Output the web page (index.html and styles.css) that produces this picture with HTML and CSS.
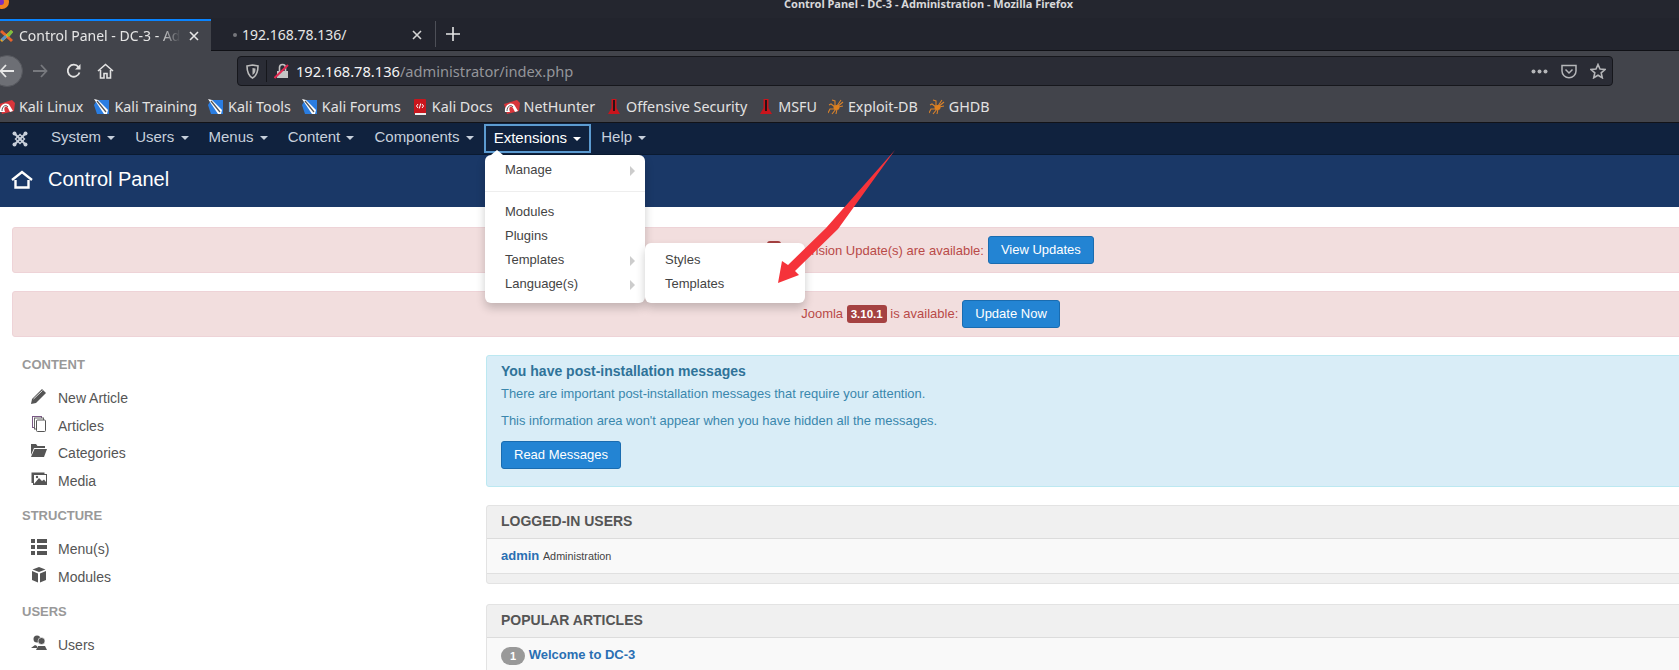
FILE: index.html
```html
<!DOCTYPE html>
<html lang="en">
<head>
  <meta charset="UTF-8">
  <title>Control Panel - DC-3 - Administration</title>
  <link rel="stylesheet" href="styles.css">
</head>
<body>
  <svg class="sprites" width="0" height="0">
    <symbol id="kaliRed" viewBox="0 0 16 16">
      <path d="M0 5 L13 1 L16 4 L15 12 L3 15 Z" fill="#d8353b"/>
      <path d="M1 13 C0 5 8 2 11 7 L14 12 L11 13 L9 9 C7 6 4 8 6 13 Z" fill="#fff"/>
      <path d="M3 12 C3 7 7 5 9 8" stroke="#333" stroke-width=".8" fill="none"/>
    </symbol>
    <symbol id="kaliBlue" viewBox="0 0 16 16">
      <path d="M3 1 H15 V15 H3 L0 6 Z" fill="#2a7de1"/>
      <path d="M0 0 L4 1 L14 11 L13 15 L10 15 Z" fill="#fff"/>
      <path d="M3 2 L12 13" stroke="#555" stroke-width="1.300"/>
    </symbol>
    <symbol id="kaliDocs" viewBox="0 0 16 16">
      <rect x="2" y="0" width="12" height="15" rx="1" fill="#c8161d"/>
      <rect x="3" y="14" width="11" height="2" fill="#eee"/>
      <path d="M6 5 L4.500 7 L6 9 M10 5 L11.500 7 L10 9 M8.700 4.500 L7.300 9.500" stroke="#fff" stroke-width="1" fill="none"/>
    </symbol>
    <symbol id="tower" viewBox="0 0 16 16">
      <path d="M5.500 0 H10.500 L10.500 9 L14 15 H2 L5.500 9 Z" fill="#c9141c"/>
      <rect x="7" y="1" width="2" height="11" fill="#2a1214"/>
    </symbol>
    <symbol id="spider" viewBox="0 0 16 16">
      <g stroke="#d9822b" stroke-width="1.100" fill="none">
        <path d="M9 7 L13 1 M9 8 L15 3 M10 8 L15 7 M7 7 L7 2 L4 1 M7 8 L3 5 L1 6 M7 10 L2 10 L0 14 M8 10 L4 15 M9 10 L8 15"/>
      </g>
      <ellipse cx="8.500" cy="8.500" rx="3" ry="2.500" fill="#dd7f1e"/>
    </symbol>
  </svg>

  <div class="titlebar">
    <svg class="ff-logo" width="12" height="12" viewBox="0 0 12 12"><circle cx="2" cy="2" r="7" fill="#f3831f"/><circle cx="1" cy="2" r="3" fill="#7b2fbe"/></svg>
    <span class="window-title">Control Panel - DC-3 - Administration - Mozilla Firefox</span>
  </div>

  <div class="tabstrip">
    <div class="tab tab-active">
      <svg class="favicon" width="14" height="16" viewBox="0 0 14 16">
        <path d="M1 3 L12 13" stroke="#e8642c" stroke-width="3"/>
        <path d="M12 3 L1 13" stroke="#f4a81d" stroke-width="3"/>
        <path d="M2 12 L6 8" stroke="#5091cd" stroke-width="3"/>
        <path d="M8 8 L12 3" stroke="#7ac143" stroke-width="3"/>
      </svg>
      <span class="tab-title fade">Control Panel - DC-3 - Ad</span>
      <svg class="tab-x" width="10" height="10" viewBox="0 0 10 10"><path d="M1 1 L9 9 M9 1 L1 9" stroke="#e6e6e6" stroke-width="1.600"/></svg>
    </div>
    <div class="tab tab-other">
      <span class="tab-dot"></span>
      <span class="tab-title">192.168.78.136/</span>
      <svg class="tab-x" width="10" height="10" viewBox="0 0 10 10"><path d="M1 1 L9 9 M9 1 L1 9" stroke="#d5d5d5" stroke-width="1.600"/></svg>
    </div>
    <span class="tab-sep"></span>
    <svg class="tab-new" width="14" height="14" viewBox="0 0 14 14"><path d="M7 0 V14 M0 7 H14" stroke="#e6e6e6" stroke-width="1.600"/></svg>
  </div>

  <div class="toolbar">
    <div class="navbtns">
      <span class="back-circle">
        <svg width="16" height="14" viewBox="0 0 16 14"><path d="M15 7 H2 M7 1 L1.500 7 L7 13" stroke="#e8e8e8" stroke-width="1.800" fill="none"/></svg>
      </span>
      <svg class="nav-fwd" width="16" height="14" viewBox="0 0 16 14"><path d="M1 7 H14 M9 1 L14.500 7 L9 13" stroke="#77797e" stroke-width="1.800" fill="none"/></svg>
      <svg class="nav-reload" width="16" height="16" viewBox="0 0 16 16"><path d="M13.500 9.500 A6 6 0 1 1 12.500 4" stroke="#e2e2e2" stroke-width="1.800" fill="none"/><path d="M14.500 1 V6.500 H9 Z" fill="#e2e2e2"/></svg>
      <svg class="nav-home" width="17" height="16" viewBox="0 0 17 16"><path d="M1 8 L8.500 1.500 L16 8 M3.500 7 V15 H7 V10.500 H10 V15 H13.500 V7" stroke="#e2e2e2" stroke-width="1.600" fill="none"/></svg>
    </div>
    <div class="urlbar">
      <svg class="url-shield" width="13" height="15" viewBox="0 0 13 15"><path d="M1 2 L6.500 1 L12 2 C12 8 11 11.500 6.500 14 C2 11.500 1 8 1 2 Z" stroke="#bbb" stroke-width="1.600" fill="none"/><path d="M6.500 4 L9.500 4.500 C9.500 8 9 9.500 6.500 11 Z" fill="#bbb"/></svg>
      <span class="url-sep"></span>
      <svg class="url-lock" width="15" height="16" viewBox="0 0 15 16"><path d="M3 8 H14 V15 H3 Z" fill="#c4c4c4"/><path d="M5.500 8 V4.500 A3 3 0 0 1 11.500 4.500 V8" stroke="#c4c4c4" stroke-width="1.600" fill="none"/><path d="M0.500 15 L14 2" stroke="#e22850" stroke-width="2"/></svg>
      <span class="url-text"><span class="url-host">192.168.78.136</span>/administrator/index.php</span>
      <span class="url-actions">
        <svg width="17" height="5" viewBox="0 0 17 5"><circle cx="2.500" cy="2.500" r="2" fill="#b5b6b9"/><circle cx="8.500" cy="2.500" r="2" fill="#b5b6b9"/><circle cx="14.500" cy="2.500" r="2" fill="#b5b6b9"/></svg>
        <svg width="16" height="15" viewBox="0 0 16 15"><path d="M1 1.500 H15 V7 A7 6.800 0 0 1 1 7 Z" stroke="#b5b6b9" stroke-width="1.500" fill="none"/><path d="M4.500 5.500 L8 9 L11.500 5.500" stroke="#b5b6b9" stroke-width="1.500" fill="none"/></svg>
        <svg width="16" height="16" viewBox="0 0 16 16"><path d="M8 1.500 L10 6 L15 6.500 L11.200 9.800 L12.300 14.800 L8 12.200 L3.700 14.800 L4.800 9.800 L1 6.500 L6 6 Z" stroke="#b5b6b9" stroke-width="1.600" fill="none"/></svg>
      </span>
    </div>
    <div class="bookmarks">
      <span class="bm"><svg width="16" height="16"><use href="#kaliRed"/></svg>Kali Linux</span>
      <span class="bm"><svg width="16" height="16"><use href="#kaliBlue"/></svg>Kali Training</span>
      <span class="bm"><svg width="16" height="16"><use href="#kaliBlue"/></svg>Kali Tools</span>
      <span class="bm"><svg width="16" height="16"><use href="#kaliBlue"/></svg>Kali Forums</span>
      <span class="bm"><svg width="16" height="16"><use href="#kaliDocs"/></svg>Kali Docs</span>
      <span class="bm"><svg width="16" height="16"><use href="#kaliRed"/></svg>NetHunter</span>
      <span class="bm"><svg width="16" height="16"><use href="#tower"/></svg>Offensive Security</span>
      <span class="bm"><svg width="16" height="16"><use href="#tower"/></svg>MSFU</span>
      <span class="bm"><svg width="16" height="16"><use href="#spider"/></svg>Exploit-DB</span>
      <span class="bm"><svg width="16" height="16"><use href="#spider"/></svg>GHDB</span>
    </div>
  </div>

  <div class="viewport">
    <div class="page">
      <nav class="admin-nav">
        <svg class="joomla-logo" width="16" height="16" viewBox="0 0 16 16">
          <g fill="none" stroke="#c9d0da" stroke-width="2">
            <path d="M3 3 L8 8 L13 13 M13 3 L8 8 L3 13"/>
            <path d="M8 3.500 L12.500 8 L8 12.500 L3.500 8 Z" stroke-width="1.400"/>
          </g>
          <circle cx="2.500" cy="2.500" r="2" fill="#c9d0da"/><circle cx="13.500" cy="2.500" r="2" fill="#c9d0da"/><circle cx="2.500" cy="13.500" r="2" fill="#c9d0da"/><circle cx="13.500" cy="13.500" r="2" fill="#c9d0da"/>
        </svg>
        <ul class="nav-menu">
          <li>System <b class="caret"></b></li>
          <li>Users <b class="caret"></b></li>
          <li>Menus <b class="caret"></b></li>
          <li>Content <b class="caret"></b></li>
          <li>Components <b class="caret"></b></li>
          <li class="open">Extensions <b class="caret"></b></li>
          <li>Help <b class="caret"></b></li>
        </ul>
      </nav>

      <header class="page-head">
        <svg width="22" height="19" viewBox="0 0 22 19"><path d="M1 10 L11 2 L21 10" stroke="#fff" stroke-width="2.400" fill="none"/><path d="M4.500 10 V17.500 H17.500 V10" stroke="#fff" stroke-width="2.400" fill="none"/></svg>
        <h1>Control Panel</h1>
      </header>

      <div class="content">
        <div class="notice notice-first">
          <span class="count-badge"></span>
          <span>Extension Update(s) are available:</span>
          <span class="btn">View Updates</span>
        </div>
        <div class="notice">
          <span>Joomla <span class="version">3.10.1</span> is available:</span>
          <span class="btn">Update Now</span>
        </div>

        <div class="columns">
          <aside class="sidebar">
            <h2>CONTENT</h2>
            <ul>
              <li>
                <svg width="16" height="16" viewBox="0 0 16 16"><path d="M0 16 L1 11 L11 1 L15 5 L5 15 Z" fill="#555"/><path d="M2.500 11 L11.500 2.500" stroke="#fff" stroke-width=".8"/></svg>
                New Article
              </li>
              <li>
                <svg width="16" height="16" viewBox="0 0 16 16"><rect x="1.500" y="0.500" width="9" height="11" fill="#fff" stroke="#7b5a86"/><rect x="3.500" y="2" width="9" height="11" fill="#fff" stroke="#666"/><rect x="5.500" y="4" width="9" height="11.500" rx="1" fill="#fff" stroke="#555"/></svg>
                Articles
              </li>
              <li>
                <svg width="16" height="14" viewBox="0 0 16 14"><path d="M0 0 H5 L6.500 2 H14 V4 H3 L0 11 Z" fill="#555"/><path d="M3.500 5 H16 L13 13 H0 Z" fill="#555"/></svg>
                Categories
              </li>
              <li>
                <svg width="16" height="13" viewBox="0 0 16 13"><path d="M0.500 0.500 H13.500 V2 H2 V11 H0.500 Z" fill="#555"/><rect x="2.500" y="2.500" width="13" height="10" fill="#fff" stroke="#555"/><path d="M3 12 L8 6 L11 9 L13 7.500 L15 10 V12 Z" fill="#555"/><circle cx="6" cy="5" r="1.200" fill="#555"/></svg>
                Media
              </li>
            </ul>
            <h2>STRUCTURE</h2>
            <ul>
              <li>
                <svg width="16" height="16" viewBox="0 0 16 16"><path d="M0 0 H4 V4 H0 Z M6 0 H16 V4 H6 Z M0 6 H4 V10 H0 Z M6 6 H16 V10 H6 Z M0 12 H4 V16 H0 Z M6 12 H16 V16 H6 Z" fill="#555"/></svg>
                Menu(s)
              </li>
              <li>
                <svg width="16" height="16" viewBox="0 0 16 16"><path d="M8 0 L14.500 2.500 L8 5 L1.500 2.500 Z M1 4 L7 6.500 V15.500 L1 13 Z M15 4 L9 6.500 V15.500 L15 13 Z" fill="#555"/></svg>
                Modules
              </li>
            </ul>
            <h2>USERS</h2>
            <ul>
              <li>
                <svg width="16" height="15" viewBox="0 0 16 15"><circle cx="6" cy="4" r="3.500" fill="#555"/><circle cx="10.500" cy="6" r="3.500" fill="#555" stroke="#fff" stroke-width=".6"/><path d="M0 13 L4 10 L6 11 L6 13 Z M5 15 L7 11 L14 11 L16 15 Z" fill="#555"/></svg>
                Users
              </li>
            </ul>
          </aside>

          <main class="main-col">
            <div class="info-box">
              <h4>You have post-installation messages</h4>
              <p>There are important post-installation messages that require your attention.</p>
              <p>This information area won't appear when you have hidden all the messages.</p>
              <span class="btn btn-read">Read Messages</span>
            </div>

            <section class="well well-users">
              <h2>LOGGED-IN USERS</h2>
              <div class="well-row"><a class="link">admin</a> <small>Administration</small></div>
            </section>

            <section class="well well-popular">
              <h2>POPULAR ARTICLES</h2>
              <div class="well-row"><span class="hits">1</span> <a class="link">Welcome to DC-3</a></div>
            </section>
          </main>
        </div>
      </div>

      <ul class="dropdown">
        <li class="has-sub">Manage</li>
        <li class="divider"></li>
        <li>Modules</li>
        <li>Plugins</li>
        <li class="has-sub">Templates</li>
        <li class="has-sub">Language(s)</li>
      </ul>
      <ul class="dropdown dropdown-sub">
        <li>Styles</li>
        <li>Templates</li>
      </ul>
    </div>

    <svg class="arrow" width="130" height="140" viewBox="0 0 130 140"><path d="M125 5 L68 84 L25 126 L29 130 L8 138 L12 116 L18 120 L56 83 Z" fill="#f5333a"/></svg>
  </div>
</body>
</html>
```

FILE: styles.css
```css
html, body {
  margin: 0;
  height: 670px;
  overflow: hidden;
  background: #fff;
}

body {
  font-family: "Liberation Sans", Arial, sans-serif;
  font-size: 14px;
  color: #555;
}

ul {
  list-style: none;
  margin: 0;
  padding: 0;
}

.sprites {
  position: absolute;
}

/* firefox chrome */
.titlebar {
  height: 18px;
  background: #24262f;
  position: relative;
  text-align: center;
  overflow: hidden;
  padding-left: 178px;
  box-sizing: border-box;
}

.ff-logo {
  position: absolute;
  left: 0;
  top: 0;
}

.window-title {
  display: block;
  margin-top: -5px;
  font: bold 11px "Noto Sans", sans-serif;
  line-height: 18px;
  color: #d8d8da;
}

.tabstrip {
  height: 33px;
  background: #22242d;
  border-bottom: 1px solid #101116;
  display: flex;
  align-items: center;
  box-sizing: border-box;
}

.tab {
  height: 32px;
  display: flex;
  align-items: center;
  gap: 5px;
  color: #e6e6e6;
  font: 14px "Noto Sans", sans-serif;
  box-sizing: border-box;
  margin-top: 1px;
}

.tab-other {
  width: 218px;
  padding: 0 7px 0 14px;
}

.tab-active {
  width: 211px;
  padding-right: 12px;
  background: #42444b;
  border-top: 2px solid #0a84ff;
}

.tab-title {
  flex: 1;
  white-space: nowrap;
  overflow: hidden;
}

.fade {
  -webkit-mask-image: linear-gradient(to right, #000 85%, transparent 98%);
  mask-image: linear-gradient(to right, #000 85%, transparent 98%);
}

.tab-dot {
  width: 4px;
  height: 4px;
  margin-left: 8px;
  border-radius: 50%;
  background: #75767b;
}

.tab-sep {
  width: 1px;
  height: 26px;
  margin-left: 6px;
  background: #4d4f57;
}

.tab-new {
  margin-left: 10px;
}

.toolbar {
  height: 71px;
  background: #42444b;
  position: relative;
  border-bottom: 1px solid #121318;
  box-sizing: content-box;
}

.navbtns {
  position: absolute;
  left: -9px;
  top: 4px;
  display: flex;
  align-items: center;
}

.back-circle {
  width: 32px;
  height: 32px;
  border-radius: 50%;
  background: #6d6f75;
  border: 1px solid #55575d;
  box-sizing: border-box;
  display: flex;
  align-items: center;
  justify-content: center;
}

.nav-fwd {
  margin-left: 9px;
}

.nav-reload {
  margin-left: 18px;
}

.nav-home {
  margin-left: 15px;
}

.urlbar {
  position: absolute;
  left: 237px;
  top: 5px;
  width: 1376px;
  height: 30px;
  background: #2a2c35;
  border: 1px solid #16171c;
  border-radius: 4px;
  display: flex;
  align-items: center;
  box-sizing: border-box;
  padding-left: 8px;
}

.url-sep {
  width: 1px;
  height: 22px;
  margin: 0 7px 0 7px;
  background: #16171c;
}

.url-text {
  margin-left: 7px;
  font: 14.650px "Noto Sans", sans-serif;
  color: #94959a;
}

.url-host {
  color: #f4f4f5;
}

.url-actions {
  margin-left: auto;
  display: flex;
  align-items: center;
  gap: 13px;
  padding-right: 6px;
}

.bookmarks {
  position: absolute;
  left: -1px;
  top: 46px;
  display: flex;
  align-items: center;
  gap: 11px;
  font: 14.300px "Noto Sans", sans-serif;
  color: #e2e2e2;
  white-space: nowrap;
}

.bm {
  display: flex;
  align-items: center;
  gap: 4px;
}

/* joomla page, wider than the window */
.viewport {
  height: 547px;
  overflow: hidden;
  position: relative;
}

.page {
  width: 1861px;
  position: relative;
}

.admin-nav {
  height: 32px;
  background: #10223e;
  display: flex;
  align-items: center;
  box-sizing: border-box;
  border-bottom: 1px solid #0a1a30;
}

.joomla-logo {
  margin-left: 12px;
}

.nav-menu {
  display: flex;
  margin-left: 13px;
}

.nav-menu li {
  padding: 0 10px;
  height: 30px;
  line-height: 26px;
  font-size: 15px;
  color: #c7d0dc;
  box-sizing: border-box;
  white-space: nowrap;
}

.nav-menu .open {
  color: #fff;
  border: 2px solid #5c9bd1;
  padding: 0 8px;
  line-height: 23px;
  height: 29px;
}

.caret {
  display: inline-block;
  width: 0;
  height: 0;
  margin-left: 2px;
  vertical-align: middle;
  border-top: 4px solid currentColor;
  border-left: 4px solid transparent;
  border-right: 4px solid transparent;
}

.page-head {
  height: 52px;
  box-sizing: border-box;
  padding: 0 0 4px 11px;
  background: #1a3867;
  display: flex;
  align-items: center;
  gap: 15px;
}

.page-head h1 {
  margin: 0;
  font-size: 20px;
  font-weight: normal;
  color: #fff;
}

.content {
  padding: 20px 12px 0;
}

.notice {
  height: 46px;
  background: #f2dede;
  border: 1px solid #eed3d7;
  border-radius: 3px;
  box-sizing: border-box;
  display: flex;
  align-items: center;
  justify-content: center;
  gap: 4px;
  color: #b94a48;
  font-size: 13px;
  margin-bottom: 18px;
}

.count-badge {
  width: 14px;
  height: 12px;
  margin-bottom: 6px;
  background: #a54141;
  border-radius: 3px;
}

.version {
  display: inline-block;
  padding: 3px 4px;
  background: #a54141;
  color: #fff;
  font-size: 11.500px;
  font-weight: bold;
  border-radius: 3px;
}

.btn {
  display: inline-block;
  padding: 0 12px;
  height: 28px;
  line-height: 26px;
  box-sizing: border-box;
  background: #2384d3;
  border: 1px solid #1a6cb0;
  border-radius: 3px;
  color: #fff;
  font-size: 13px;
  white-space: nowrap;
}

.columns {
  display: flex;
  margin-top: 18px;
}

.sidebar {
  width: 474px;
  padding-left: 10px;
  box-sizing: border-box;
}

.sidebar h2 {
  margin: 0 0 9px;
  font-size: 13px;
  line-height: 20px;
  color: #999;
}

.sidebar ul {
  margin-bottom: 11.500px;
}

.sidebar li {
  height: 27.700px;
  display: flex;
  align-items: center;
  padding-left: 9px;
  gap: 11px;
  position: relative;
}

.sidebar li svg {
  flex: 0 0 16px;
  margin-top: -4px;
}

.main-col {
  flex: 1;
}

.info-box {
  height: 132px;
  box-sizing: border-box;
  padding: 6px 14px;
  background: #d9edf7;
  border: 1px solid #bce8f1;
  border-radius: 3px;
  color: #3a87ad;
  font-size: 12.950px;
}

.info-box h4 {
  margin: 0 0 5px;
  font-size: 14px;
  line-height: 18px;
  color: #2f7399;
}

.info-box p {
  margin: 0 0 9px;
  line-height: 18px;
}

.btn-read {
  margin-top: 2px;
}

.well {
  margin-top: 18px;
  background: #f0f0f0;
  border: 1px solid #e3e3e3;
  border-radius: 3px;
}

.well-users {
  height: 79px;
  box-sizing: border-box;
}

.well-popular {
  margin-top: 20px;
}

.well h2 {
  margin: 0;
  height: 33px;
  padding-left: 14px;
  font-size: 14px;
  line-height: 31px;
  color: #555;
  border-bottom: 1px solid #dcdcdc;
  box-sizing: border-box;
}

.well-row {
  height: 35px;
  line-height: 34px;
  padding-left: 14px;
  background: #f9f9f9;
  border-bottom: 1px solid #e0e0e0;
  box-sizing: border-box;
  font-size: 13px;
}

.link {
  color: #2a6fb3;
  font-weight: bold;
}

.well-row small {
  font-size: 10.800px;
  color: #444;
}

.hits {
  display: inline-block;
  width: 24px;
  height: 18px;
  line-height: 18px;
  text-align: center;
  border-radius: 9px;
  background: #999;
  color: #fff;
  font-size: 11px;
  font-weight: bold;
  vertical-align: middle;
}

/* menus open over the page */
.dropdown {
  position: absolute;
  left: 485px;
  top: 32px;
  width: 160px;
  height: 148px;
  box-sizing: border-box;
  padding: 3px 0;
  background: #fff;
  border-radius: 6px;
  box-shadow: 0 5px 10px rgba(0, 0, 0, .2);
  font-size: 13px;
  color: #444;
}

.dropdown::before {
  content: "";
  position: absolute;
  left: 6px;
  top: -5px;
  border-bottom: 5px solid #fff;
  border-left: 6px solid transparent;
  border-right: 6px solid transparent;
}

.dropdown-sub::before {
  display: none;
}

.dropdown li {
  height: 24px;
  line-height: 24px;
  padding-left: 20px;
  position: relative;
}

.dropdown .divider {
  height: 1px;
  margin: 9px 0 8px;
  padding: 0;
  background: #eee;
}

.has-sub::after {
  content: "";
  position: absolute;
  right: 10px;
  top: 8px;
  border-left: 5px solid #ccc;
  border-top: 5px solid transparent;
  border-bottom: 5px solid transparent;
}

.dropdown-sub {
  left: 645px;
  top: 120px;
  width: 160px;
  height: 60px;
  padding-top: 5px;
}

.arrow {
  position: absolute;
  left: 770px;
  top: 22px;
}
```
